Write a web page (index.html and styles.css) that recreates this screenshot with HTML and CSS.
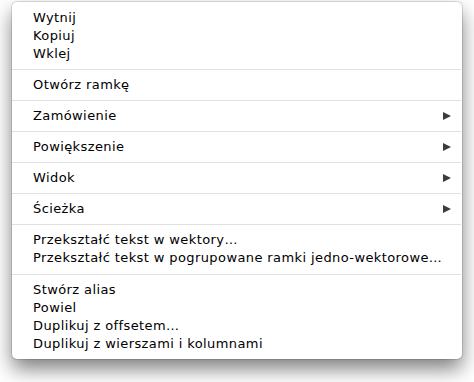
FILE: index.html
```html
<!DOCTYPE html>
<html lang="pl">
<head>
<meta charset="utf-8">
<title>Menu</title>
<link rel="stylesheet" href="styles.css">
</head>
<body>
<div class="menu">
  <div class="group">
    <div class="item">Wytnij</div>
    <div class="item">Kopiuj</div>
    <div class="item">Wklej</div>
  </div>
  <div class="sep"></div>
  <div class="group">
    <div class="item">Otwórz ramkę</div>
  </div>
  <div class="sep"></div>
  <div class="group">
    <div class="item sub">Zamówienie<span class="arrow"></span></div>
  </div>
  <div class="sep"></div>
  <div class="group">
    <div class="item sub">Powiększenie<span class="arrow"></span></div>
  </div>
  <div class="sep"></div>
  <div class="group">
    <div class="item sub">Widok<span class="arrow"></span></div>
  </div>
  <div class="sep"></div>
  <div class="group">
    <div class="item sub">Ścieżka<span class="arrow"></span></div>
  </div>
  <div class="sep"></div>
  <div class="group group-tall">
    <div class="item">Przekształć tekst w wektory…</div>
    <div class="item">Przekształć tekst w pogrupowane ramki jedno-wektorowe…</div>
  </div>
  <div class="sep"></div>
  <div class="group">
    <div class="item">Stwórz alias</div>
    <div class="item">Powiel</div>
    <div class="item">Duplikuj z offsetem…</div>
    <div class="item">Duplikuj z wierszami i kolumnami</div>
  </div>
</div>
</body>
</html>
```
FILE: styles.css
```css
html, body {
  margin: 0;
  background: #ffffff;
}
body {
  padding: 2px 12px 23px;
  font-family: "DejaVu Sans", "Liberation Sans", sans-serif;
  font-size: 13px;
  letter-spacing: 0.4px;
  color: #000;
}
.menu {
  width: 450px;
  box-sizing: border-box;
  background: #fff;
  border-radius: 5px;
  padding-top: 1px;
  box-shadow: 0 0 0 1px rgba(0, 0, 0, 0.12), 0 10px 20px rgba(0, 0, 0, 0.5);
}
.group {
  padding: 6px 0;
}
.group-tall {
  padding-bottom: 7px;
}
.item {
  box-sizing: border-box;
  height: 18px;
  line-height: 17px;
  padding: 0 11px 1px 21px;
  display: flex;
  align-items: center;
  justify-content: space-between;
  white-space: nowrap;
}
.sep {
  height: 1px;
  background: #e1e1e1;
  margin-right: 1px;
}
.arrow {
  width: 0;
  height: 0;
  margin-top: 1px;
  border-top: 4.5px solid transparent;
  border-bottom: 4.5px solid transparent;
  border-left: 8px solid #3c3c3c;
}
```
